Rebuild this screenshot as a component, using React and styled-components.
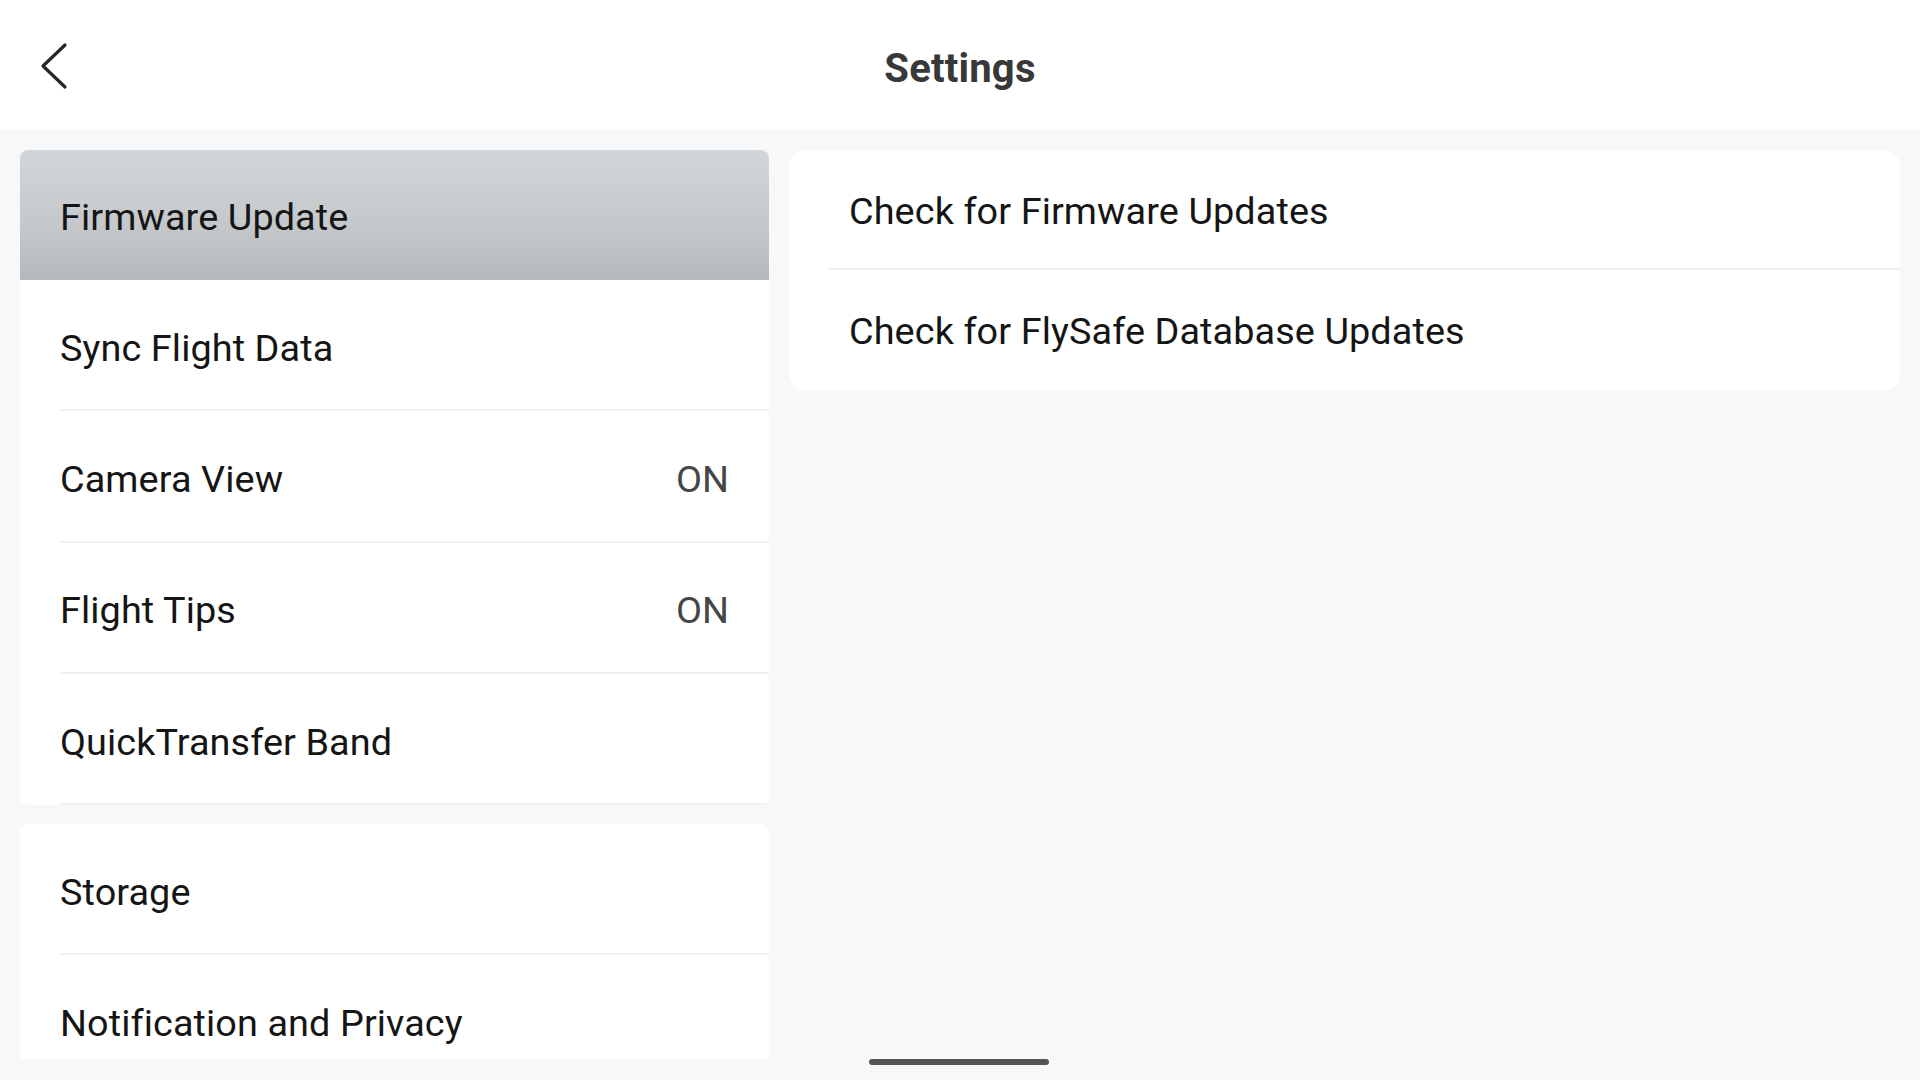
import React from "react";
import styled, { createGlobalStyle } from "styled-components";

const Global = createGlobalStyle`
  html, body { margin: 0; padding: 0; }
  body {
    background: #f7f8fa;
    font-family: Roboto, "Noto Sans", "Liberation Sans", sans-serif;
    -webkit-font-smoothing: antialiased;
  }
  * { box-sizing: border-box; }
`;

const Screen = styled.div`
  width: 1920px;
  height: 1080px;
  position: relative;
  display: flex;
  flex-direction: column;
  background: #f7f8fa;
  overflow: hidden;
`;

const Header = styled.header`
  height: 130px;
  flex: none;
  background: #ffffff;
  display: flex;
  align-items: center;
  justify-content: center;
  position: relative;
`;

const BackButton = styled.button`
  position: absolute;
  left: 30px;
  top: 36px;
  width: 48px;
  height: 60px;
  border: 0;
  padding: 0;
  background: transparent;
  display: flex;
  align-items: center;
  justify-content: center;
`;

const Title = styled.h1`
  margin: 0;
  font-size: 40px;
  font-weight: 700;
  color: #383838;
  letter-spacing: 0.2px;
  transform: translateY(3px);
`;

const Body = styled.main`
  flex: 1;
  display: flex;
  gap: 20px;
  padding: 20px 20px 21px 20px;
  min-height: 0;
`;

const LeftColumn = styled.div`
  width: 749px;
  flex: none;
  display: flex;
  flex-direction: column;
  gap: 19px;
  overflow: hidden;
`;

const Card = styled.section`
  background: #ffffff;
  border-radius: ${(p) => p.$radius || 8}px;
  overflow: hidden;
  flex: none;
`;

const RightColumn = styled.div`
  flex: 1;
  display: flex;
  flex-direction: column;
  align-items: stretch;
`;

const MenuRow = styled.div`
  height: ${(p) => p.$h}px;
  display: flex;
  align-items: center;
  justify-content: space-between;
  padding: ${(p) => p.$pt || 0}px ${(p) => p.$pr}px 0 ${(p) => p.$pl}px;
  position: relative;
  background: ${(p) =>
    p.$selected
      ? "linear-gradient(180deg, #d3d6d9 0%, #c6c9cc 55%, #b6b9bc 100%)"
      : "transparent"};

  &::after {
    content: "";
    display: ${(p) => (p.$divider ? "block" : "none")};
    position: absolute;
    left: ${(p) => p.$dl}px;
    right: 0;
    bottom: 0;
    height: 2px;
    background: #f0f1f2;
  }
`;

const Label = styled.span`
  font-size: 37.8px;
  color: #151515;
  font-weight: 400;
  letter-spacing: 0.1px;
`;

const Value = styled.span`
  font-size: 37.8px;
  color: #444648;
  font-weight: 400;
`;

const HomeBar = styled.div`
  position: absolute;
  left: 869px;
  bottom: 15px;
  width: 180px;
  height: 6px;
  border-radius: 3px;
  background: #555555;
`;

const group1 = [
  { label: "Firmware Update", selected: true },
  { label: "Sync Flight Data" },
  { label: "Camera View", value: "ON" },
  { label: "Flight Tips", value: "ON" },
  { label: "QuickTransfer Band" },
];

const group2 = [{ label: "Storage" }, { label: "Notification and Privacy" }];

const rightItems = [
  "Check for Firmware Updates",
  "Check for FlySafe Database Updates",
];

export default function App() {
  return (
    <Screen>
      <Global />
      <Header>
        <BackButton aria-label="Back">
          <svg width="30" height="48" viewBox="0 0 30 48" fill="none">
            <path
              d="M26 3 L4 24 L26 45"
              stroke="#262626"
              strokeWidth="3.2"
              strokeLinecap="round"
              strokeLinejoin="round"
            />
          </svg>
        </BackButton>
        <Title>Settings</Title>
      </Header>
      <Body>
        <LeftColumn>
          <Card $radius={8}>
            {group1.map((it, i) => (
              <MenuRow
                key={it.label}
                $h={i === 0 ? 130 : 131.3}
                $pt={4}
                $pl={40}
                $pr={40}
                $dl={40}
                $selected={it.selected}
                $divider={!it.selected}
              >
                <Label>{it.label}</Label>
                {it.value && <Value>{it.value}</Value>}
              </MenuRow>
            ))}
          </Card>
          <Card $radius={8}>
            {group2.map((it, i) => (
              <MenuRow
                key={it.label}
                $h={131.3}
                $pt={4}
                $pl={40}
                $pr={40}
                $dl={40}
                $divider={i === 0}
              >
                <Label>{it.label}</Label>
              </MenuRow>
            ))}
          </Card>
        </LeftColumn>
        <RightColumn>
          <Card $radius={16}>
            {rightItems.map((t, i) => (
              <MenuRow
                key={t}
                $h={120}
                $pt={2}
                $pl={60}
                $pr={40}
                $dl={40}
                $divider={i === 0}
              >
                <Label>{t}</Label>
              </MenuRow>
            ))}
          </Card>
        </RightColumn>
      </Body>
      <HomeBar />
    </Screen>
  );
}
